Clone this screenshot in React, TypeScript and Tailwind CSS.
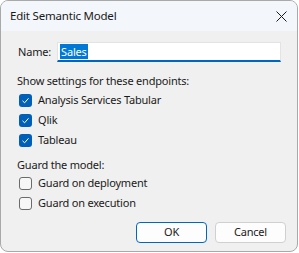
import React from "react";

const font = { fontFamily: '"Noto Sans", "Open Sans", sans-serif', letterSpacing: "-0.2px" };

function CheckRow({ label, checked }: { label: string; checked: boolean }) {
  return (
    <div className="flex h-[20px] items-center pl-[2px]">
      {checked ? (
        <span className="flex h-[13px] w-[13px] items-center justify-center rounded-[3px] bg-[#005fb8]">
          <svg width="9" height="9" viewBox="0 0 9 9" fill="none">
            <path d="M1.5 4.8 L3.6 6.8 L7.5 2.3" stroke="white" strokeWidth="1" />
          </svg>
        </span>
      ) : (
        <span className="h-[13px] w-[13px] rounded-[3px] border border-[#6b6b6b] bg-[#f7f7f7]" />
      )}
      <span className="ml-[6px] text-[11px] text-[#1a1a1a]">{label}</span>
    </div>
  );
}

export default function App() {
  return (
    <div className="h-[253px] w-[299px] bg-white" style={font}>
      <div className="flex h-[252px] w-[298px] flex-col overflow-hidden rounded-[8px] border border-[#a9a9a9] bg-[#f0f0f0]">
        <div className="flex h-[30px] items-center justify-between bg-[#f3f6fb] pl-[9px] pr-[9px]">
          <span className="text-[11.5px] text-[#1a1a1a]">Edit Semantic Model</span>
          <svg width="11" height="11" viewBox="0 0 11 11" className="mr-[1px]">
            <path d="M0.5 0.5 L10.5 10.5 M10.5 0.5 L0.5 10.5" stroke="#1a1a1a" strokeWidth="1" />
          </svg>
        </div>

        <div className="flex flex-col px-[16px]">
          <div className="mt-[11px] flex h-[20px] items-center">
            <span className="w-[41px] pl-[1px] text-[11px] text-[#1a1a1a]">Name:</span>
            <div className="flex h-[20px] w-[229px] items-center border border-b-2 border-[#e3e3e3] border-b-[#0067c0] bg-white pl-[2px]">
              <span className="bg-[#0078d7] px-[1px] text-[11px] leading-[15px] text-white">Sales</span>
            </div>
          </div>

          <div className="mt-[11px] h-[16px] text-[11px] leading-[16px] text-[#1a1a1a]">
            Show settings for these endpoints:
          </div>
          <div className="mt-[1px] flex flex-col">
            <CheckRow label="Analysis Services Tabular" checked />
            <CheckRow label="Qlik" checked />
            <CheckRow label="Tableau" checked />
          </div>

          <div className="mt-[7px] h-[16px] text-[11px] leading-[16px] text-[#1a1a1a]">Guard the model:</div>
          <div className="flex flex-col">
            <CheckRow label="Guard on deployment" checked={false} />
            <CheckRow label="Guard on execution" checked={false} />
          </div>

          <div className="mt-[9px] flex justify-end gap-[8px]">
            <button className="h-[21px] w-[71px] rounded-[4px] border border-[#0067c0] bg-[#fdfdfd] text-[11px] text-[#1a1a1a]">
              OK
            </button>
            <button className="mr-[-5px] h-[21px] w-[71px] rounded-[4px] border border-[#d0d0d0] bg-[#fdfdfd] text-[11px] text-[#1a1a1a]">
              Cancel
            </button>
          </div>
        </div>
      </div>
    </div>
  );
}
